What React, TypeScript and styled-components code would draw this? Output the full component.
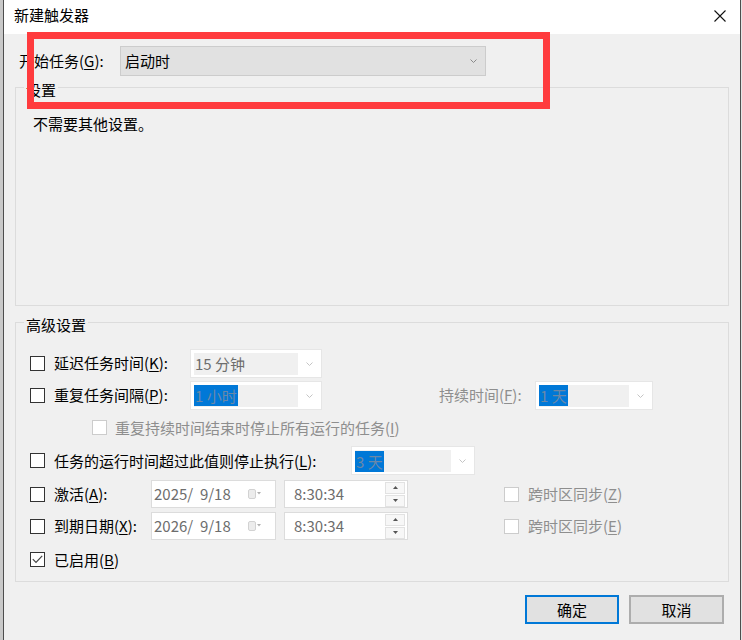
import React from 'react';
import styled, { createGlobalStyle } from 'styled-components';

const GlobalStyle = createGlobalStyle`
  html, body { margin: 0; padding: 0; background: #cbcbcb; }
  body { font-family: "Noto Sans CJK SC", "Microsoft YaHei", sans-serif; }
  * { box-sizing: border-box; }
`;

const Page = styled.div`
  position: relative;
  width: 742px;
  height: 640px;
  display: flex;
  background: #c9c9c9;
  overflow: hidden;
  font-family: "Noto Sans CJK SC", sans-serif;
  font-size: 15px;
  color: #000;
`;

const Window = styled.div`
  margin-left: 3px;
  width: 738px;
  height: 640px;
  border-left: 1px solid #4e4e4e;
  border-right: 1px solid #4e4e4e;
  background: #f0f0f0;
  display: flex;
  flex-direction: column;
`;

const RightEdge = styled.div`
  width: 1px;
  background: #e4e4e4;
`;

const TitleBar = styled.div`
  height: 34px;
  flex: none;
  background: #fff;
  display: flex;
  align-items: flex-start;
  justify-content: space-between;
  padding: 5px 14px 0 10px;
`;

const Title = styled.div`
  font-size: 15px;
  line-height: 20px;
  color: #000;
`;

const CloseBtn = styled.div`
  margin-top: 5px;
  width: 12px;
  height: 12px;
  display: flex;
`;

const StartRow = styled.div`
  margin-top: 12px;
  padding-left: 15px;
  height: 30px;
  display: flex;
  align-items: center;
`;

const StartLabel = styled.div`
  width: 101px;
  line-height: 20px;
  white-space: nowrap;
`;

const Key = styled.span`
  text-decoration: underline;
  text-underline-offset: 2px;
  text-decoration-thickness: 1px;
`;

const StartCombo = styled.div`
  width: 366px;
  height: 30px;
  background: #e1e1e1;
  border: 1px solid #cccccc;
  display: flex;
  align-items: center;
  justify-content: space-between;
  padding: 0 8px 0 4px;
  line-height: 20px;
`;

const Group = styled.fieldset<{ $h: number; $mt: number }>`
  margin: ${p => p.$mt}px 0 0 11px;
  width: 714px;
  height: ${p => p.$h}px;
  border: 1px solid #dcdcdc;
  padding: 0;
  min-width: 0;
  flex: none;
`;

const Legend = styled.legend`
  margin-left: 8px;
  padding: 6px 2px 0;
  line-height: 16px;
  font-size: 15px;
  color: #000;
`;

const Note = styled.div`
  margin: 16px 0 0 17px;
  line-height: 20px;
`;

const Rows = styled.div`
  padding: 14px 0 0 14px;
  display: flex;
  flex-direction: column;
`;

const Row = styled.div<{ $h: number; $indent?: number }>`
  height: ${p => p.$h}px;
  padding-left: ${p => p.$indent ?? 0}px;
  display: flex;
  align-items: center;
`;

const Option = styled.div<{ $ml: number }>`
  margin-left: ${p => p.$ml}px;
  display: flex;
  align-items: center;
`;

const Box = styled.div<{ $disabled?: boolean }>`
  width: 15px;
  height: 15px;
  flex: none;
  background: #fff;
  border: 1px solid ${p => (p.$disabled ? '#cccccc' : '#333333')};
  display: flex;
  align-items: center;
  justify-content: center;
`;

const Label = styled.div<{ $w?: number; $gray?: boolean; $ml?: number }>`
  margin-left: ${p => p.$ml ?? 9}px;
  ${p => (p.$w ? `width: ${p.$w}px;` : '')}
  flex: none;
  line-height: 20px;
  white-space: nowrap;
  color: ${p => (p.$gray ? '#8e8e8e' : '#000')};
`;

const Combo = styled.div<{ $w: number; $ml?: number }>`
  margin-left: ${p => p.$ml ?? 0}px;
  width: ${p => p.$w}px;
  height: 29px;
  flex: none;
  background: #fff;
  border: 1px solid #e6e6e6;
  display: flex;
  align-items: center;
  padding: 3px 8px 2px 3px;
  gap: 8px;
`;

const ComboField = styled.div`
  flex: 1;
  height: 100%;
  background: #f0f0f0;
  display: flex;
  align-items: center;
`;

const ComboText = styled.span<{ $sel?: boolean }>`
  line-height: 21px;
  padding: 0 1px;
  white-space: pre;
  color: ${p => (p.$sel ? '#6b88a8' : '#6d6d6d')};
  background: ${p => (p.$sel ? '#0078d7' : 'transparent')};
`;

const Field = styled.div<{ $w: number; $ml?: number; $pl: number }>`
  margin-left: ${p => p.$ml ?? 0}px;
  width: ${p => p.$w}px;
  height: 28px;
  flex: none;
  background: #fff;
  border: 1px solid #dcdcdc;
  display: flex;
  align-items: center;
  justify-content: space-between;
  padding: 0 2px 0 ${p => p.$pl}px;
  line-height: 20px;
  color: #6d6d6d;
  white-space: pre;
`;

const CalIcon = styled.div`
  margin-right: 12px;
  display: flex;
`;

const Spinner = styled.div`
  display: flex;
  flex-direction: column;
  gap: 1px;
`;

const SpinBtn = styled.div`
  width: 20px;
  height: 12px;
  background: #f7f7f7;
  border: 1px solid #e2e2e2;
  display: flex;
  align-items: center;
  justify-content: center;
`;

const ButtonRow = styled.div`
  margin-top: 13px;
  padding-right: 16px;
  display: flex;
  justify-content: flex-end;
  gap: 10px;
`;

const Button = styled.div<{ $primary?: boolean }>`
  width: ${p => (p.$primary ? 94 : 95)}px;
  height: 29px;
  background: #e1e1e1;
  border: 2px solid ${p => (p.$primary ? '#0078d7' : '#adadad')};
  display: flex;
  align-items: center;
  justify-content: center;
  line-height: 20px;
  color: #000;
`;

const Highlight = styled.div`
  position: absolute;
  left: 27px;
  top: 32px;
  width: 523px;
  height: 77px;
  border: 7px solid #ff3b3e;
  pointer-events: none;
`;

const Chevron = ({ color = '#8a8a8a' }: { color?: string }) => (
  <svg width="7" height="4" viewBox="0 0 7 4">
    <polyline points="0.5,0.5 3.5,3.5 6.5,0.5" fill="none" stroke={color} strokeWidth="1" />
  </svg>
);

const CheckBox = ({ checked, disabled }: { checked?: boolean; disabled?: boolean }) => (
  <Box $disabled={disabled}>
    {checked && (
      <svg width="11" height="9" viewBox="0 0 11 9">
        <polyline points="0.8,4.2 4,7.4 10.2,0.8" fill="none" stroke="#444" strokeWidth="1.2" />
      </svg>
    )}
  </Box>
);

const DropCombo = ({ w, text, sel, ml }: { w: number; text: string; sel?: boolean; ml?: number }) => (
  <Combo $w={w} $ml={ml}>
    <ComboField>
      <ComboText $sel={sel}>{text}</ComboText>
    </ComboField>
    <Chevron color="#c4c4c4" />
  </Combo>
);

const DateField = ({ text }: { text: string }) => (
  <Field $w={125} $pl={2}>
    <span>{text}</span>
    <CalIcon>
      <svg width="13" height="10" viewBox="0 0 13 10">
        <rect x="0.5" y="0.5" width="7" height="9" rx="1.5" fill="#ececec" stroke="#d2d2d2" />
        <polygon points="9,3 13,3 11,5.5" fill="#b0b0b0" />
      </svg>
    </CalIcon>
  </Field>
);

const TimeField = ({ text }: { text: string }) => (
  <Field $w={124} $ml={8} $pl={9}>
    <span>{text}</span>
    <Spinner>
      <SpinBtn>
        <svg width="5" height="3" viewBox="0 0 5 3">
          <polygon points="0,3 5,3 2.5,0" fill="#555" />
        </svg>
      </SpinBtn>
      <SpinBtn>
        <svg width="5" height="3" viewBox="0 0 5 3">
          <polygon points="0,0 5,0 2.5,3" fill="#555" />
        </svg>
      </SpinBtn>
    </Spinner>
  </Field>
);

export default function App() {
  return (
    <>
      <GlobalStyle />
      <Page>
        <Window>
          <TitleBar>
            <Title>新建触发器</Title>
            <CloseBtn>
              <svg width="12" height="12" viewBox="0 0 12 12">
                <path d="M0.5 0.5 L11.5 11.5 M11.5 0.5 L0.5 11.5" stroke="#111" strokeWidth="1.1" />
              </svg>
            </CloseBtn>
          </TitleBar>

          <StartRow>
            <StartLabel>
              开始任务(<Key>G</Key>):
            </StartLabel>
            <StartCombo>
              <span>启动时</span>
              <Chevron />
            </StartCombo>
          </StartRow>

          <Group $h={230} $mt={0}>
            <Legend>设置</Legend>
            <Note>不需要其他设置。</Note>
          </Group>

          <Group $h={271} $mt={5}>
            <Legend>高级设置</Legend>
            <Rows>
              <Row $h={32}>
                <CheckBox />
                <Label $w={136}>
                  延迟任务时间(<Key>K</Key>):
                </Label>
                <DropCombo w={132} text="15 分钟" />
              </Row>
              <Row $h={32}>
                <CheckBox />
                <Label $w={136}>
                  重复任务间隔(<Key>P</Key>):
                </Label>
                <DropCombo w={132} text="1 小时" sel />
                <Label $w={96} $ml={117} $gray>
                  持续时间(<Key>F</Key>):
                </Label>
                <DropCombo w={118} text="1 天" sel />
              </Row>
              <Row $h={33} $indent={62}>
                <CheckBox disabled />
                <Label $ml={8} $gray>
                  重复持续时间结束时停止所有运行的任务(<Key>I</Key>)
                </Label>
              </Row>
              <Row $h={33}>
                <CheckBox />
                <Label $w={297}>
                  任务的运行时间超过此值则停止执行(<Key>L</Key>):
                </Label>
                <DropCombo w={124} text="3 天" sel />
              </Row>
              <Row $h={34}>
                <CheckBox />
                <Label $w={97}>
                  激活(<Key>A</Key>):
                </Label>
                <DateField text="2025/  9/18" />
                <TimeField text="8:30:34" />
                <Option $ml={96}>
                  <CheckBox disabled />
                  <Label $gray>
                    跨时区同步(<Key>Z</Key>)
                  </Label>
                </Option>
              </Row>
              <Row $h={30}>
                <CheckBox />
                <Label $w={97}>
                  到期日期(<Key>X</Key>):
                </Label>
                <DateField text="2026/  9/18" />
                <TimeField text="8:30:34" />
                <Option $ml={96}>
                  <CheckBox disabled />
                  <Label $gray>
                    跨时区同步(<Key>E</Key>)
                  </Label>
                </Option>
              </Row>
              <Row $h={37}>
                <CheckBox checked />
                <Label>
                  已启用(<Key>B</Key>)
                </Label>
              </Row>
            </Rows>
          </Group>

          <ButtonRow>
            <Button $primary>确定</Button>
            <Button>取消</Button>
          </ButtonRow>
        </Window>
        <RightEdge />
        <Highlight />
      </Page>
    </>
  );
}
